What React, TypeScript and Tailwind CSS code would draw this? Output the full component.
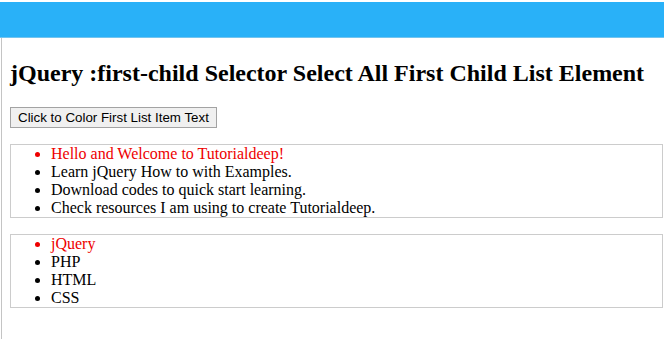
export default function App() {
  const topics = [
    'Hello and Welcome to Tutorialdeep!',
    'Learn jQuery How to with Examples.',
    'Download codes to quick start learning.',
    'Check resources I am using to create Tutorialdeep.',
  ];
  const langs = ['jQuery', 'PHP', 'HTML', 'CSS'];

  return (
    <div className="h-[339px] w-[664px] flex flex-col bg-white pt-[2px] overflow-hidden">
      {/* Top bar */}
      <div className="h-[36px] shrink-0 bg-[#29b1f8] border-b border-[#74c4ee]" />

      {/* Page body */}
      <div className="flex-1 ml-[1px] border-l border-[#c4c4c4] pl-[8px] pr-[1px] font-['Liberation_Serif',serif] text-black">
        <h2 className="mt-[21px] mb-[20px] text-[24px] leading-[28px] font-bold whitespace-nowrap">
          jQuery :first-child Selector Select All First Child List Element
        </h2>

        <button className="block h-[21px] px-[7px] border border-[#a3a3a3] bg-[#f0f0f0] font-['Liberation_Sans',Arial,sans-serif] text-[13.33px] leading-[17px] text-black">
          Click to Color First List Item Text
        </button>

        <ul className="mt-[16px] border border-[#cccccc] pl-[40px] list-disc text-[16px] leading-[18px]">
          {topics.map((t, i) => (
            <li key={t} className={i === 0 ? 'text-[#ee0000]' : ''}>
              {t}
            </li>
          ))}
        </ul>

        <ul className="mt-[16px] border border-[#cccccc] pl-[40px] list-disc text-[16px] leading-[18px]">
          {langs.map((l, i) => (
            <li key={l} className={i === 0 ? 'text-[#ee0000]' : ''}>
              {l}
            </li>
          ))}
        </ul>
      </div>
    </div>
  );
}
